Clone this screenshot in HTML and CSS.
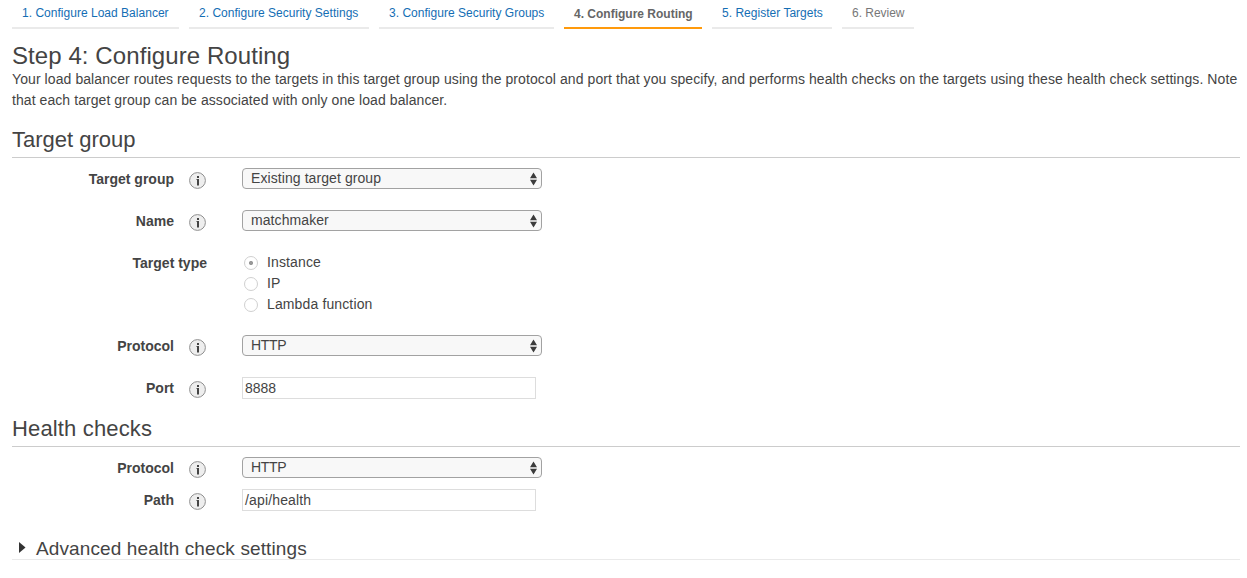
FILE: index.html
```html
<!DOCTYPE html>
<html lang="en">
<head>
<meta charset="utf-8">
<title>Configure Routing</title>
<link rel="stylesheet" href="styles.css">
</head>
<body>
<svg width="0" height="0" class="defs" aria-hidden="true">
  <symbol id="info" viewBox="0 0 17 17">
    <circle cx="8.5" cy="8.5" r="7.9" fill="#eee" stroke="#8f8f8f"/>
    <path d="M8 4h2v2H8zM8 7h2v6.5H8z" fill="#444"/>
    <path d="M7.2 7H8v1h-.8z" fill="#888"/>
  </symbol>
  <symbol id="arrows" viewBox="0 0 8 14">
    <path d="M3.5.5 7 6.2H0zM3.5 13.5 7 7.8H0z" fill="#3c3c3c"/>
  </symbol>
</svg>
<nav class="tabs">
  <a class="tab t1"><span>1. Configure Load Balancer</span></a>
  <a class="tab t2"><span>2. Configure Security Settings</span></a>
  <a class="tab t3"><span>3. Configure Security Groups</span></a>
  <a class="tab t4 active"><span>4. Configure Routing</span></a>
  <a class="tab t5"><span>5. Register Targets</span></a>
  <a class="tab t6 pending"><span>6. Review</span></a>
</nav>
<main class="page">
  <h1 class="title"><span>Step 4: Configure Routing</span></h1>
  <p class="intro"><span class="intro-a">Your load balancer routes requests to the targets in this target group using the protocol and port that you specify, and performs health checks on the targets using these health check settings. Note</span><br><span class="intro-b">that each target group can be associated with only one load balancer.</span></p>

  <h2 class="section"><span>Target group</span></h2>
  <div class="form">
    <div class="row"><b class="label">Target group</b><svg class="info"><use href="#info"/></svg><div class="select"><span>Existing target group</span><svg class="arrows"><use href="#arrows"/></svg></div></div>
    <div class="row"><b class="label">Name</b><svg class="info"><use href="#info"/></svg><div class="select"><span>matchmaker</span><svg class="arrows"><use href="#arrows"/></svg></div></div>
    <div class="row types"><b class="label wide">Target type</b>
      <div class="radios">
        <div class="option"><i class="radio on"></i><span>Instance</span></div>
        <div class="option"><i class="radio"></i><span>IP</span></div>
        <div class="option"><i class="radio"></i><span>Lambda function</span></div>
      </div>
    </div>
    <div class="row"><b class="label">Protocol</b><svg class="info"><use href="#info"/></svg><div class="select tight"><span>HTTP</span><svg class="arrows"><use href="#arrows"/></svg></div></div>
    <div class="row"><b class="label">Port</b><svg class="info"><use href="#info"/></svg><div class="input">8888</div></div>
  </div>

  <h2 class="section health"><span>Health checks</span></h2>
  <div class="form compact">
    <div class="row"><b class="label">Protocol</b><svg class="info"><use href="#info"/></svg><div class="select tight"><span>HTTP</span><svg class="arrows"><use href="#arrows"/></svg></div></div>
    <div class="row"><b class="label">Path</b><svg class="info"><use href="#info"/></svg><div class="input path">/api/health</div></div>
  </div>

  <div class="advanced">
    <svg class="caret" viewBox="0 0 7 11"><path d="M0 0 6.5 5.5 0 11z" fill="#333"/></svg>
    <span>Advanced health check settings</span>
  </div>
</main>
</body>
</html>
```
FILE: styles.css
```css
* { box-sizing: border-box; }
body {
  margin: 0;
  height: 578px;
  overflow: hidden;
  background: #fff;
  color: #444;
  font: 14px/21px "Liberation Sans", Arial, sans-serif;
}
.defs { display: block; }
.tabs { display: flex; gap: 10px; padding-left: 12px; height: 29px; }
.tab {
  height: 29px;
  padding: 4px 0 0 10px;
  border-bottom: 2px solid #eaeaea;
  color: #146eb4;
  font-size: 12px;
  line-height: 18px;
  letter-spacing: 0.02px;
  white-space: nowrap;
}
.t1 { width: 167px; }
.t2 { width: 180px; }
.t3 { width: 175px; }
.t4 { width: 138px; }
.t5 { width: 120px; }
.t6 { width: 72px; }
.active { padding-top: 5px; border-color: #ff9a0c; color: #666; font-weight: bold; letter-spacing: 0; }
.pending { color: #777; letter-spacing: -0.03px; }
.page { padding: 12px 7px 0 12px; }
h1, h2, p { margin: 0; font-weight: normal; }
.title { height: 28px; font-size: 24px; line-height: 30px; letter-spacing: 0.08px; }
.intro { height: 42px; white-space: nowrap; }
.intro-a { letter-spacing: 0.084px; }
.intro-b { letter-spacing: 0.07px; }
.section {
  height: 47px;
  padding-top: 16px;
  border-bottom: 1px solid #ccc;
  font-size: 22px;
  line-height: 26px;
}
.form { padding-top: 10px; }
.row { display: flex; height: 42px; }
.types { height: 83px; }
.label { width: 162px; padding-top: 1px; text-align: right; white-space: nowrap; }
.label.wide { width: 195px; }
.info { width: 17px; height: 17px; margin: 4px 36px 0 15px; }
.select {
  display: flex;
  justify-content: space-between;
  align-items: center;
  width: 300px;
  height: 21px;
  padding: 0 3px 0 8px;
  border: 1px solid #a2a2a2;
  border-radius: 4px;
  background: #f8f8f8;
  line-height: 19px;
  letter-spacing: 0.08px;
}
.tight { letter-spacing: -0.3px; }
.arrows { width: 8px; height: 14px; }
.input { width: 294px; height: 22px; padding-left: 2px; border: 1px solid #ddd; line-height: 20px; }
.path { letter-spacing: 0.15px; }
.radios { padding-left: 37px; }
.option { display: flex; gap: 9px; height: 21px; letter-spacing: 0.13px; }
.radio { width: 14px; height: 14px; margin-top: 4px; border: 1px solid #d0d0d0; border-radius: 50%; }
.radio.on { background: radial-gradient(circle, #999 0 1.7px, transparent 2.4px); }
.health { height: 28px; padding-top: 0; line-height: 20px; letter-spacing: 0.15px; }
.compact .row { height: 32px; }
.compact .row:last-child { height: 22px; }
.advanced {
  display: flex;
  height: 31px;
  margin-top: 18px;
  padding: 9px 0 0 7px;
  border-bottom: 1px solid #eaeaea;
  font-size: 19px;
  line-height: 21px;
  letter-spacing: 0.12px;
}
.caret { width: 7px; height: 11px; margin: 4px 10px 0 0; }
```
